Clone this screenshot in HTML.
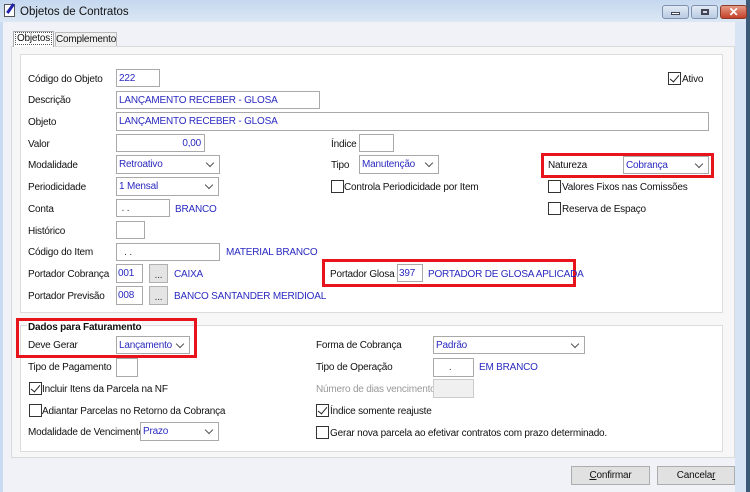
<!DOCTYPE html>
<html><head><meta charset="utf-8"><style>
*{box-sizing:border-box;margin:0;padding:0}
body{width:750px;height:492px;overflow:hidden;background:#f1f2f8;font-family:"Liberation Sans",sans-serif;font-size:10px;letter-spacing:-0.2px;color:#111;position:relative}
.a{position:absolute;white-space:nowrap}
.lbl{position:absolute;white-space:nowrap;line-height:13px;margin-top:1px}
.in{position:absolute;background:#fff;border:1px solid #a9a9a9;color:#2a2ac0;line-height:17px;padding-left:2px;overflow:hidden;white-space:nowrap}
.sel:after{content:"";position:absolute;right:6px;top:4px;width:5px;height:5px;border-right:1px solid #555;border-bottom:1px solid #555;transform:rotate(45deg)}
.blue{color:#2a2ac0}
.cb{position:absolute;width:13px;height:13px;border:1px solid #333;background:#fff}
.cb.on:after{content:"";position:absolute;left:3px;top:0px;width:4px;height:8px;border-right:1.5px solid #222;border-bottom:1.5px solid #222;transform:rotate(40deg)}
.red{position:absolute;border:3px solid #e8141b}
.btn3{position:absolute;background:#e4e4e4;border:1px solid #b0b0b0;text-align:center;line-height:13px;color:#333}
.panel{position:absolute;background:#fff;border:1px solid #dcdcdc}
.bt{position:absolute;background:#e1e1e1;border:1px solid #adadad;text-align:center;line-height:17px}
</style></head><body>
<div class="a" style="left:0;top:0;width:750px;height:22px;background:linear-gradient(#c5d8ef,#dce7f4)"></div>
<div class="a" style="left:0;top:22px;width:3px;height:470px;background:#c8dbf0"></div>
<div class="a" style="left:735px;top:22px;width:11px;height:470px;background:#d6e4f3"></div>
<div class="a" style="left:746px;top:0;width:4px;height:492px;background:#3c5a78"></div>
<div class="a" style="left:4px;top:4px;width:11px;height:13px;background:#fff;border:1px solid #555"></div>
<div class="a" style="left:9px;top:3px;width:3px;height:11px;background:#22a;transform:rotate(35deg)"></div>
<div class="a" style="left:20px;top:5px;font-size:11.5px;letter-spacing:0;line-height:14px">Objetos de Contratos</div>
<div class="a" style="left:662px;top:5px;width:27px;height:14px;border:1px solid #7f92ad;border-radius:3px;background:linear-gradient(#e2eaf5,#b9cbe2)"><div class="a" style="left:8px;top:6px;width:9px;height:3px;background:#fff;border:1px solid #445"></div></div>
<div class="a" style="left:691px;top:5px;width:27px;height:14px;border:1px solid #7f92ad;border-radius:3px;background:linear-gradient(#e2eaf5,#b9cbe2)"><div class="a" style="left:9px;top:3px;width:8px;height:6px;border:2px solid #445"></div></div>
<div class="a" style="left:720px;top:5px;width:27px;height:14px;border:1px solid #8b3a2c;border-radius:3px;background:linear-gradient(#e59a86,#c4412a);color:#fff;font-weight:bold;text-align:center;line-height:12px;font-size:12px">✕</div>
<div class="a" style="left:11px;top:46px;width:724px;height:412px;background:#f7f7f7;border:1px solid #dadada"></div>
<div class="a" style="left:13px;top:31px;width:41px;height:16px;background:#fff;border:1px solid #aaa;border-bottom:none;text-align:center;line-height:14px"><span style="border:1px dotted #555;padding:0 1px">Objetos</span></div>
<div class="a" style="left:55px;top:32px;width:62px;height:14px;background:#f0f0f0;border:1px solid #bbb;border-bottom:none;text-align:center;line-height:13px">Complemento</div>
<div class="panel" style="left:20px;top:54px;width:703px;height:259px"></div>
<div class="panel" style="left:20px;top:325px;width:703px;height:127px"></div>

<div class="lbl" style="left:28px;top:72px">Código do Objeto</div>
<div class="in" style="left:116px;top:69px;width:44px;height:18px">222</div>
<div class="cb on" style="left:668px;top:72px"></div><div class="lbl" style="left:682px;top:72px">Ativo</div>
<div class="lbl" style="left:28px;top:93px">Descrição</div>
<div class="in" style="left:116px;top:91px;width:204px;height:18px">LANÇAMENTO RECEBER - GLOSA</div>
<div class="lbl" style="left:28px;top:115px">Objeto</div>
<div class="in" style="left:116px;top:112px;width:593px;height:19px">LANÇAMENTO RECEBER - GLOSA</div>
<div class="lbl" style="left:28px;top:137px">Valor</div>
<div class="in" style="left:116px;top:134px;width:89px;height:18px;text-align:right;padding-right:3px">0,00</div>
<div class="lbl" style="left:331px;top:137px">Índice</div>
<div class="in" style="left:359px;top:134px;width:35px;height:18px"></div>
<div class="lbl" style="left:28px;top:158px">Modalidade</div>
<div class="in sel" style="left:116px;top:155px;width:104px;height:19px">Retroativo</div>
<div class="lbl" style="left:331px;top:158px">Tipo</div>
<div class="in sel" style="left:359px;top:155px;width:80px;height:19px">Manutenção</div>
<div class="red" style="left:541px;top:153px;width:173px;height:25px"></div>
<div class="lbl" style="left:548px;top:158px">Natureza</div>
<div class="in sel" style="left:623px;top:156px;width:86px;height:18px">Cobrança</div>
<div class="lbl" style="left:28px;top:180px">Periodicidade</div>
<div class="in sel" style="left:116px;top:177px;width:103px;height:19px">1 Mensal</div>
<div class="cb" style="left:331px;top:180px"></div><div class="lbl" style="left:344px;top:180px">Controla Periodicidade por Item</div>
<div class="cb" style="left:548px;top:180px"></div><div class="lbl" style="left:562px;top:180px">Valores Fixos nas Comissões</div>
<div class="cb" style="left:548px;top:202px"></div><div class="lbl" style="left:562px;top:202px">Reserva de Espaço</div>
<div class="lbl" style="left:28px;top:202px">Conta</div>
<div class="in" style="left:116px;top:199px;width:54px;height:18px;color:#333">&nbsp;. .</div>
<div class="lbl blue" style="left:175px;top:202px">BRANCO</div>
<div class="lbl" style="left:28px;top:224px">Histórico</div>
<div class="in" style="left:116px;top:221px;width:29px;height:18px"></div>
<div class="lbl" style="left:28px;top:245px">Código do Item</div>
<div class="in" style="left:116px;top:243px;width:104px;height:18px;color:#333">&nbsp;&nbsp;. .</div>
<div class="lbl blue" style="left:226px;top:245px">MATERIAL BRANCO</div>
<div class="lbl" style="left:28px;top:267px">Portador Cobrança</div>
<div class="in" style="left:116px;top:264px;width:27px;height:19px;padding-left:1px">001</div>
<div class="btn3" style="left:149px;top:264px;width:19px;height:19px;line-height:22px">...</div>
<div class="lbl blue" style="left:174px;top:267px">CAIXA</div>
<div class="lbl" style="left:28px;top:289px">Portador Previsão</div>
<div class="in" style="left:116px;top:286px;width:27px;height:19px;padding-left:1px">008</div>
<div class="btn3" style="left:149px;top:286px;width:19px;height:19px;line-height:22px">...</div>
<div class="lbl blue" style="left:174px;top:289px">BANCO SANTANDER MERIDIOAL</div>
<div class="red" style="left:322px;top:259px;width:254px;height:28px"></div>
<div class="lbl" style="left:330px;top:267px">Portador Glosa</div>
<div class="in" style="left:397px;top:264px;width:26px;height:18px;padding-left:1px">397</div>
<div class="lbl blue" style="left:428px;top:267px">PORTADOR DE GLOSA APLICADA</div>

<div class="red" style="left:16px;top:318px;width:181px;height:40px"></div>
<div class="lbl" style="left:27px;top:320px;font-weight:bold;background:#fff;padding:0 1px">Dados para Faturamento</div>
<div class="lbl" style="left:28px;top:338px">Deve Gerar</div>
<div class="in sel" style="left:116px;top:336px;width:74px;height:18px">Lançamento</div>
<div class="lbl" style="left:28px;top:360px">Tipo de Pagamento</div>
<div class="in" style="left:116px;top:358px;width:22px;height:19px"></div>
<div class="cb on" style="left:29px;top:382px"></div><div class="lbl" style="left:42px;top:382px">Incluir Itens da Parcela na NF</div>
<div class="cb" style="left:29px;top:404px"></div><div class="lbl" style="left:42px;top:404px">Adiantar Parcelas no Retorno da Cobrança</div>
<div class="lbl" style="left:28px;top:425px">Modalidade de Vencimento</div>
<div class="in sel" style="left:140px;top:422px;width:79px;height:19px">Prazo</div>
<div class="lbl" style="left:316px;top:338px">Forma de Cobrança</div>
<div class="in sel" style="left:433px;top:336px;width:152px;height:18px">Padrão</div>
<div class="lbl" style="left:316px;top:360px">Tipo de Operação</div>
<div class="in" style="left:433px;top:358px;width:41px;height:19px;color:#333">&nbsp;&nbsp;&nbsp;&nbsp;&nbsp;.</div>
<div class="lbl blue" style="left:479px;top:360px">EM BRANCO</div>
<div class="lbl" style="left:316px;top:382px;color:#999">Número de dias vencimento</div>
<div class="in" style="left:433px;top:379px;width:41px;height:19px;background:#f0f0f0;border-color:#ccc"></div>
<div class="cb on" style="left:316px;top:404px"></div><div class="lbl" style="left:330px;top:404px">Índice somente reajuste</div>
<div class="cb" style="left:316px;top:426px"></div><div class="lbl" style="left:330px;top:426px">Gerar nova parcela ao efetivar contratos com prazo determinado.</div>

<div class="bt" style="left:571px;top:466px;width:79px;height:19px"><u>C</u>onfirmar</div>
<div class="bt" style="left:657px;top:466px;width:78px;height:19px">Cancela<u>r</u></div>
</body></html>
